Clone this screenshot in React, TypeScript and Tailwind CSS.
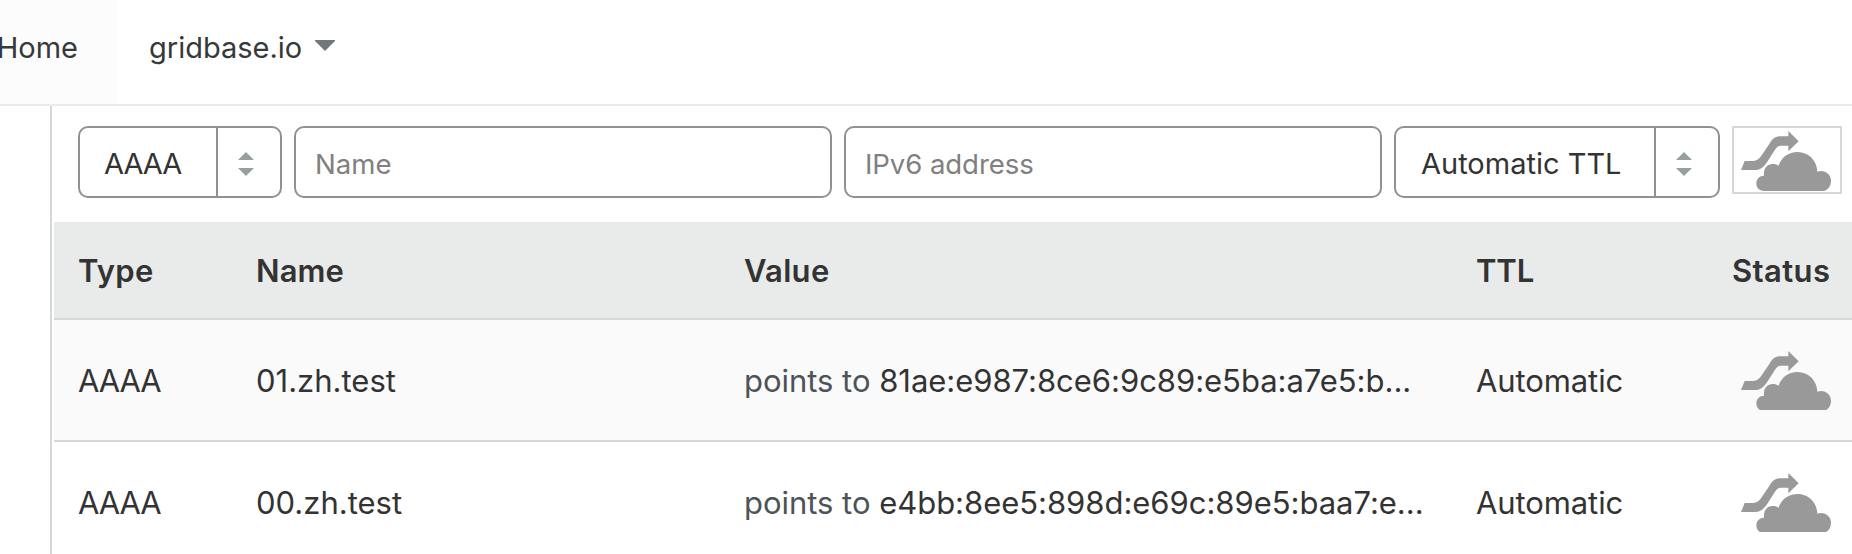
type DnsRecord = { type: string; name: string; value: string; ttl: string };

const records: DnsRecord[] = [
  { type: "AAAA", name: "01.zh.test", value: "81ae:e987:8ce6:9c89:e5ba:a7e5:b...", ttl: "Automatic" },
  { type: "AAAA", name: "00.zh.test", value: "e4bb:8ee5:898d:e69c:89e5:baa7:e...", ttl: "Automatic" },
];

const columns =
  "grid grid-cols-[178px_488px_732px_256px_1fr] items-center border-b-2 border-[#d5d7d8] pl-6 text-[31px] leading-none";

function BypassCloud({ className = "h-[60px]", height = 180 }: { className?: string; height?: number }) {
  return (
    <svg viewBox={`0 0 270 ${height}`} className={`block w-[90px] shrink-0 fill-[#999] ${className}`}>
      <path d="M0 117 L11 90 H36 C48 90 54 84 60 76 L83 42 C92 28 99 16 117 16 H142 V0 L173 31 L142 61 V44 H119 C111 44 107 49 102 56 L79 92 C69 107 59 117 42 117 Z" />
      <path d="M66 180 C52 178 46 168 46 157 C46 144 56 134 69 134 C67 112 78 99 95 99 C102 99 109 101 113 104 C120 80 142 63 170 63 C202 63 228 88 229 122 C252 115 270 131 270 149 C270 166 260 178 247 180 Z" />
    </svg>
  );
}

function Select({ value, className, textClass }: { value: string; className: string; textClass: string }) {
  return (
    <button
      type="button"
      className={`flex h-18 shrink-0 rounded-[10px] border-2 border-[#8d9297] bg-white text-left text-[29px] text-[#333] ${className}`}
    >
      <span className={`flex h-full flex-1 items-center whitespace-nowrap pt-[3px] ${textClass}`}>{value}</span>
      <span className="flex h-full w-16 items-center border-l-2 border-[#8d9297] pt-1 pl-5">
        <svg viewBox="0 0 16 24" className="h-6 w-4 fill-[#989fa1]">
          <path d="M0 8 8 0 16 8ZM0 16H16L8 24Z" />
        </svg>
      </span>
    </button>
  );
}

const field =
  "h-18 w-[538px] shrink-0 rounded-[10px] border-2 border-[#8d9297] bg-white pt-1 pl-[19px] text-[27.6px] text-[#333] outline-none placeholder:text-[#808080] placeholder:opacity-100";

export default function App() {
  return (
    <div className="flex h-[554px] w-full flex-col overflow-hidden bg-white font-['Inter',sans-serif] text-[#333]">
      <nav className="flex h-[106px] shrink-0 border-b-2 border-[#ebebeb] text-[29px] text-[#36393a]">
        <a className="flex w-[118px] items-center justify-end bg-[#fcfcfc] pr-10 pb-2">Home</a>
        <a className="flex items-center gap-[13px] pb-2 pl-[31px]">
          gridbase.io
          <svg viewBox="0 0 20 11" className="-mt-1.5 h-[11px] w-5 fill-[#72777b]">
            <path d="M0 0H20V1L10 11 0 1Z" />
          </svg>
        </a>
      </nav>

      <div className="flex min-h-0 flex-1 pl-[50px]">
        <main className="flex-1 border-l-2 border-[#d5d7d8] pl-0.5">
          <form className="flex h-[116px] items-start gap-3 pt-5 pl-6">
            <Select value="AAAA" className="w-51" textClass="pl-6 tracking-[-1px]" />
            <input className={field} placeholder="Name" />
            <input className={`${field} tracking-[-0.1px]`} placeholder="IPv6 address" />
            <Select value="Automatic TTL" className="w-[326px]" textClass="pl-[25px]" />
            <div className="h-17 w-[110px] shrink-0 border-2 border-[#d5d7d8] pt-[3px] pl-[7px]">
              <BypassCloud />
            </div>
          </form>

          <div className={`${columns} h-[98px] bg-[#e9ebea] pt-px font-semibold`}>
            <span className="tracking-[0.3px]">Type</span>
            <span className="tracking-[0.1px]">Name</span>
            <span className="tracking-[0.3px]">Value</span>
            <span className="tracking-[-0.1px]">TTL</span>
            <span className="tracking-[0.4px]">Status</span>
          </div>

          <div>
            {records.map((record) => (
              <div key={record.name} className={`${columns} h-[122px] odd:bg-[#fafafa] even:bg-white`}>
                <span className="tracking-[-1.1px]">{record.type}</span>
                <span>{record.name}</span>
                <span className="whitespace-nowrap tracking-[-0.03px]">
                  <span className="text-[#4d5358]">points to </span>
                  {record.value}
                </span>
                <span className="tracking-[-0.1px]">{record.ttl}</span>
                <span className="pt-px pl-[9px]">
                  <BypassCloud className="h-[59px]" height={177} />
                </span>
              </div>
            ))}
          </div>
        </main>
      </div>
    </div>
  );
}
